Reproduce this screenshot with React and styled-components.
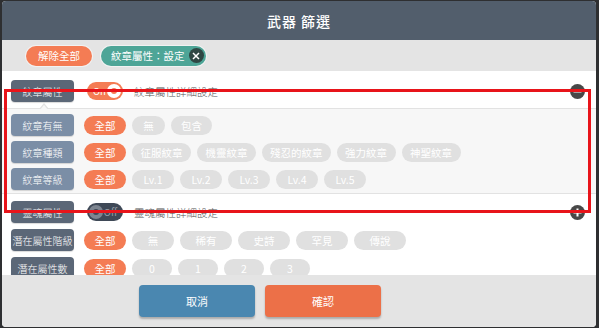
import React from "react";
import styled, { createGlobalStyle } from "styled-components";

const GlobalStyle = createGlobalStyle`
  html, body {
    margin: 0;
    padding: 0;
    background: #2e2f31;
    font-family: "Noto Sans CJK TC", "Noto Sans", sans-serif;
  }
`;

const Screen = styled.div`
  position: relative;
  width: 599px;
  height: 328px;
  padding: 1px 3px 1px 2px;
  box-sizing: border-box;
  overflow: hidden;
`;

const Modal = styled.div`
  height: 100%;
  border-radius: 4px;
  overflow: hidden;
  display: flex;
  flex-direction: column;
  background: #fff;
`;

const Header = styled.div`
  height: 39px;
  flex: none;
  background: #525e6c;
  color: #fff;
  display: flex;
  align-items: center;
  justify-content: center;
  font-size: 14px;
  font-weight: 500;
  letter-spacing: 1px;
`;

const FilterBar = styled.div`
  height: 31px;
  flex: none;
  background: #e4e4e4;
  display: flex;
  align-items: center;
  gap: 9px;
  padding-left: 24px;
`;

const Pill = styled.div`
  height: 20px;
  border-radius: 10px;
  display: flex;
  align-items: center;
  gap: 4px;
  padding: ${(p) => (p.$closable ? "0 2px 0 10px" : "0 12px")};
  background: ${(p) => p.$bg};
  color: #fff;
  font-size: 10.5px;
  box-shadow: 0 0 0 1px rgba(255, 255, 255, 0.5);
`;

const CloseDot = styled.span`
  width: 15px;
  height: 15px;
  border-radius: 50%;
  background: #2f4744;
  display: flex;
  align-items: center;
  justify-content: center;
`;

const Body = styled.div`
  flex: 1;
  overflow: hidden;
  padding-top: 9px;
  display: flex;
  flex-direction: column;
`;

const Row = styled.div`
  display: flex;
  align-items: center;
  gap: ${(p) => (p.$chips ? "6px" : "9px")};
  padding-left: 9px;
  height: 22px;
  flex: none;
`;

const MainRow = styled(Row)`
  padding-right: 11px;
`;

const Label = styled.div`
  width: 63px;
  height: 22px;
  border-radius: 4px;
  background: ${(p) => (p.$light ? "#7b8ea6" : "#5b6777")};
  color: #fff;
  font-size: 10px;
  font-weight: 300;
  white-space: nowrap;
  display: flex;
  align-items: center;
  justify-content: center;
  flex: none;
  margin-right: 4px;
  box-shadow: 0 1px 1px rgba(0, 0, 0, 0.15);
`;

const Toggle = styled.div`
  position: relative;
  width: 36px;
  height: 18px;
  border-radius: 9px;
  background: ${(p) => (p.$on ? "#f47c54" : "#3f4957")};
  color: ${(p) => (p.$on ? "#fff" : "#9aa1aa")};
  font-size: 9.5px;
  display: flex;
  align-items: center;
  justify-content: ${(p) => (p.$on ? "flex-start" : "flex-end")};
  padding: 0 6px;
  box-sizing: border-box;
  flex: none;
`;

const Knob = styled.span`
  position: absolute;
  top: 2px;
  ${(p) => (p.$on ? "right: 2px;" : "left: 2px;")}
  width: 14px;
  height: 14px;
  border-radius: 50%;
  background: ${(p) => (p.$on ? "#fff" : "#7d8590")};
  display: flex;
  align-items: center;
  justify-content: center;
  &::after {
    content: "";
    width: 6px;
    height: 6px;
    border-radius: 50%;
    background: ${(p) => (p.$on ? "#f47c54" : "#3f4957")};
  }
`;

const Caption = styled.div`
  flex: 1;
  color: #555;
  font-size: 10.5px;
  font-weight: 300;
  padding-left: 2px;
`;

const RoundIcon = styled.div`
  width: 15px;
  height: 15px;
  border-radius: 50%;
  background: #484848;
  display: flex;
  align-items: center;
  justify-content: center;
  flex: none;
`;

const Panel = styled.div`
  position: relative;
  margin-top: 6px;
  margin-bottom: 7px;
  background: #f7f7f7;
  border-top: 1px solid #e2e2e2;
  border-bottom: 1px solid #e2e2e2;
  padding: 5px 0 3px;
  display: flex;
  flex-direction: column;
  gap: 5px;
  &::before {
    content: "";
    position: absolute;
    left: 37px;
    top: -6px;
    width: 0;
    height: 0;
    border-left: 5px solid transparent;
    border-right: 5px solid transparent;
    border-bottom: 6px solid #e2e2e2;
  }
  &::after {
    content: "";
    position: absolute;
    left: 38px;
    top: -4px;
    border-left: 4px solid transparent;
    border-right: 4px solid transparent;
    border-bottom: 5px solid #f7f7f7;
  }
`;

const Stack = styled.div`
  display: flex;
  flex-direction: column;
  gap: 6px;
`;

const Chip = styled.div`
  height: 19px;
  min-width: ${(p) => p.$w || 33}px;
  padding: 0 8px;
  box-sizing: border-box;
  border-radius: 10px;
  background: ${(p) => (p.$active ? "#f47c54" : "#e0e0e0")};
  color: #fff;
  font-size: 10.5px;
  display: flex;
  align-items: center;
  justify-content: center;
  flex: none;
`;

const Footer = styled.div`
  height: 52px;
  flex: none;
  background: #e4e4e4;
  display: flex;
  justify-content: center;
  gap: 10px;
  padding: 10px 78px 0 0;
  box-sizing: border-box;
`;

const ActionButton = styled.button`
  width: 116px;
  height: 32px;
  border: none;
  border-radius: 4px;
  background: ${(p) => p.$bg};
  color: #fff;
  font-family: inherit;
  font-size: 11px;
  box-shadow: 0 2px 2px rgba(0, 0, 0, 0.25);
`;

const Highlight = styled.div`
  position: absolute;
  left: 4px;
  top: 89px;
  width: 587px;
  height: 124px;
  box-sizing: border-box;
  border: 3px solid #e8141a;
  pointer-events: none;
`;

const MinusIcon = () => (
  <RoundIcon>
    <svg width="9" height="9" viewBox="0 0 9 9">
      <rect x="0.5" y="3.5" width="8" height="2" fill="#fff" />
    </svg>
  </RoundIcon>
);

const PlusIcon = () => (
  <RoundIcon>
    <svg width="9" height="9" viewBox="0 0 9 9">
      <rect x="0.5" y="3.5" width="8" height="2" fill="#fff" />
      <rect x="3.5" y="0.5" width="2" height="8" fill="#fff" />
    </svg>
  </RoundIcon>
);

const ChipRow = ({ label, light, items }) => (
  <Row $chips>
    <Label $light={light}>{label}</Label>
    <Chip $active $w={42}>全部</Chip>
    {items.map(([text, w]) => (
      <Chip key={text} $w={w}>
        {text}
      </Chip>
    ))}
  </Row>
);

export default function App() {
  return (
    <Screen>
      <GlobalStyle />
      <Modal>
        <Header>武器 篩選</Header>
        <FilterBar>
          <Pill $bg="#f47c54">解除全部</Pill>
          <Pill $bg="#4ea597" $closable>
            紋章屬性：設定
            <CloseDot>
              <svg width="8" height="8" viewBox="0 0 8 8">
                <path d="M1 1L7 7M7 1L1 7" stroke="#fff" strokeWidth="1.5" />
              </svg>
            </CloseDot>
          </Pill>
        </FilterBar>
        <Body>
          <MainRow>
            <Label>紋章屬性</Label>
            <Toggle $on>
              On
              <Knob $on />
            </Toggle>
            <Caption>紋章屬性詳細設定</Caption>
            <MinusIcon />
          </MainRow>
          <Panel>
            <ChipRow light label="紋章有無" items={[["無", 33], ["包含", 41]]} />
            <ChipRow
              light
              label="紋章種類"
              items={[
                ["征服紋章", 59],
                ["機靈紋章", 59],
                ["殘忍的紋章", 68],
                ["強力紋章", 59],
                ["神聖紋章", 59],
              ]}
            />
            <ChipRow
              light
              label="紋章等級"
              items={[
                ["Lv.1", 42],
                ["Lv.2", 42],
                ["Lv.3", 42],
                ["Lv.4", 42],
                ["Lv.5", 42],
              ]}
            />
          </Panel>
          <Stack>
            <MainRow>
              <Label>靈魂屬性</Label>
              <Toggle>
                Off
                <Knob />
              </Toggle>
              <Caption>靈魂屬性詳細設定</Caption>
              <PlusIcon />
            </MainRow>
            <ChipRow
              label="潛在屬性階級"
              items={[
                ["無", 42],
                ["稀有", 52],
                ["史詩", 52],
                ["罕見", 52],
                ["傳說", 52],
              ]}
            />
            <ChipRow
              label="潛在屬性數"
              items={[
                ["0", 40],
                ["1", 40],
                ["2", 40],
                ["3", 40],
              ]}
            />
          </Stack>
        </Body>
        <Footer>
          <ActionButton $bg="#4a87b0">取消</ActionButton>
          <ActionButton $bg="#ec7048">確認</ActionButton>
        </Footer>
      </Modal>
      <Highlight />
    </Screen>
  );
}
